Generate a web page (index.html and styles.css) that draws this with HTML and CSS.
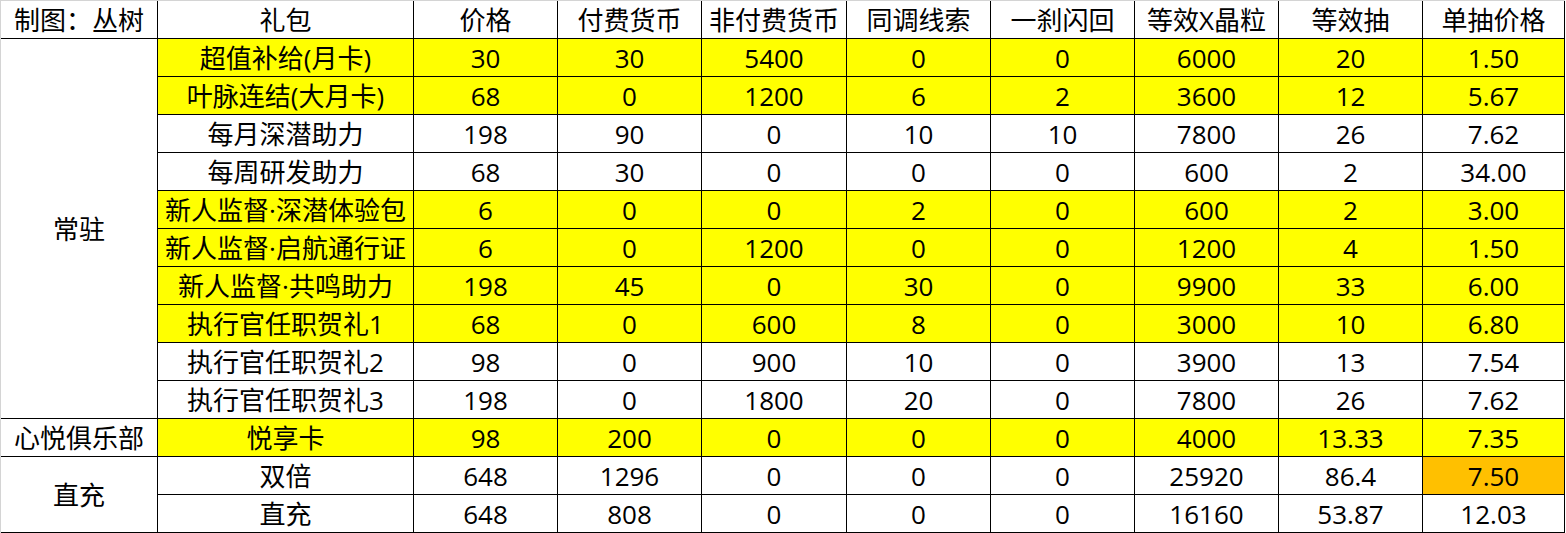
FILE: index.html
```html
<!DOCTYPE html>
<html lang="zh-CN">
<head>
<meta charset="utf-8">
<title>礼包性价比</title>
<link rel="stylesheet" href="styles.css">
</head>
<body>
<div class="sheet">
  <div class="c">制图：丛树</div><div class="c">礼包</div><div class="c">价格</div><div class="c">付费货币</div><div class="c">非付费货币</div><div class="c">同调线索</div><div class="c">一刹闪回</div><div class="c">等效X晶粒</div><div class="c">等效抽</div><div class="c">单抽价格</div>

  <div class="c span10">常驻</div>
  <div class="c y">超值补给(月卡)</div><div class="c y">30</div><div class="c y">30</div><div class="c y">5400</div><div class="c y">0</div><div class="c y">0</div><div class="c y">6000</div><div class="c y">20</div><div class="c y">1.50</div>
  <div class="c y">叶脉连结(大月卡)</div><div class="c y">68</div><div class="c y">0</div><div class="c y">1200</div><div class="c y">6</div><div class="c y">2</div><div class="c y">3600</div><div class="c y">12</div><div class="c y">5.67</div>
  <div class="c">每月深潜助力</div><div class="c">198</div><div class="c">90</div><div class="c">0</div><div class="c">10</div><div class="c">10</div><div class="c">7800</div><div class="c">26</div><div class="c">7.62</div>
  <div class="c">每周研发助力</div><div class="c">68</div><div class="c">30</div><div class="c">0</div><div class="c">0</div><div class="c">0</div><div class="c">600</div><div class="c">2</div><div class="c">34.00</div>
  <div class="c y">新人监督·深潜体验包</div><div class="c y">6</div><div class="c y">0</div><div class="c y">0</div><div class="c y">2</div><div class="c y">0</div><div class="c y">600</div><div class="c y">2</div><div class="c y">3.00</div>
  <div class="c y">新人监督·启航通行证</div><div class="c y">6</div><div class="c y">0</div><div class="c y">1200</div><div class="c y">0</div><div class="c y">0</div><div class="c y">1200</div><div class="c y">4</div><div class="c y">1.50</div>
  <div class="c y">新人监督·共鸣助力</div><div class="c y">198</div><div class="c y">45</div><div class="c y">0</div><div class="c y">30</div><div class="c y">0</div><div class="c y">9900</div><div class="c y">33</div><div class="c y">6.00</div>
  <div class="c y">执行官任职贺礼1</div><div class="c y">68</div><div class="c y">0</div><div class="c y">600</div><div class="c y">8</div><div class="c y">0</div><div class="c y">3000</div><div class="c y">10</div><div class="c y">6.80</div>
  <div class="c">执行官任职贺礼2</div><div class="c">98</div><div class="c">0</div><div class="c">900</div><div class="c">10</div><div class="c">0</div><div class="c">3900</div><div class="c">13</div><div class="c">7.54</div>
  <div class="c">执行官任职贺礼3</div><div class="c">198</div><div class="c">0</div><div class="c">1800</div><div class="c">20</div><div class="c">0</div><div class="c">7800</div><div class="c">26</div><div class="c">7.62</div>

  <div class="c">心悦俱乐部</div>
  <div class="c y">悦享卡</div><div class="c y">98</div><div class="c y">200</div><div class="c y">0</div><div class="c y">0</div><div class="c y">0</div><div class="c y">4000</div><div class="c y">13.33</div><div class="c y">7.35</div>

  <div class="c span2">直充</div>
  <div class="c">双倍</div><div class="c">648</div><div class="c">1296</div><div class="c">0</div><div class="c">0</div><div class="c">0</div><div class="c">25920</div><div class="c">86.4</div><div class="c o">7.50</div>
  <div class="c">直充</div><div class="c">648</div><div class="c">808</div><div class="c">0</div><div class="c">0</div><div class="c">0</div><div class="c">16160</div><div class="c">53.87</div><div class="c">12.03</div>
</div>
</body>
</html>
```

FILE: styles.css
```css
html, body {
  margin: 0;
  padding: 0;
  background: #ffffff;
}

.sheet {
  display: grid;
  grid-template-columns: 157px 256px 144px 144px 145px 144px 144px 144px 144px 142px;
  grid-auto-rows: 38px;
  width: max-content;
  border-top: 1px solid #d4d4d4;
  border-left: 1px solid #d4d4d4;
  font-family: "Open Sans", "Noto Sans CJK SC", sans-serif;
  font-size: 26px;
  color: #000000;
}

.c {
  box-sizing: border-box;
  display: flex;
  align-items: center;
  justify-content: center;
  border-right: 1px solid #000000;
  border-bottom: 1px solid #000000;
  white-space: nowrap;
  line-height: 1;
  background: #ffffff;
}

.span10 {
  grid-row: span 10;
}

.span2 {
  grid-row: span 2;
}

.y {
  background: #ffff00;
}

.o {
  background: #ffc000;
}
```
